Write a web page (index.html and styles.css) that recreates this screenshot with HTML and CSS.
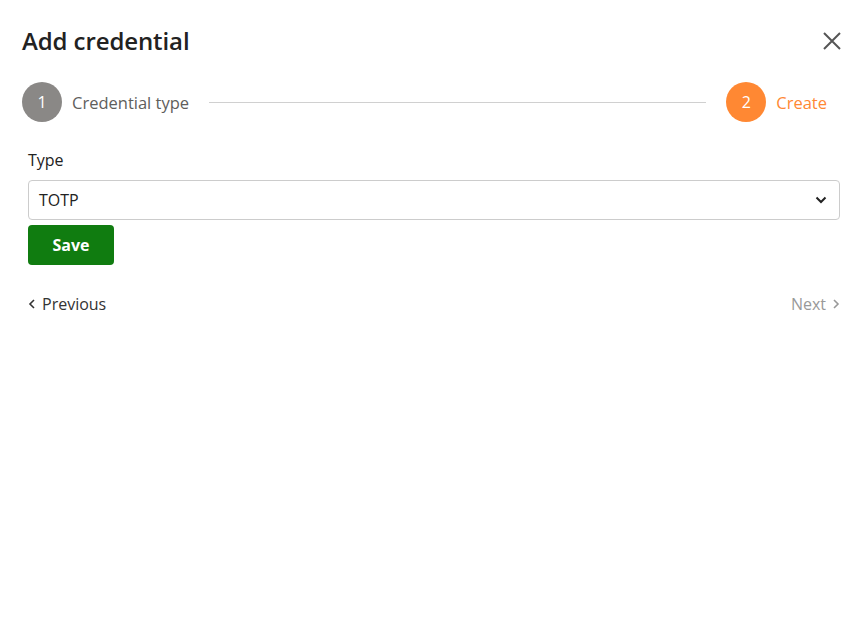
FILE: index.html
```html
<!DOCTYPE html>
<html>
<head>
<meta charset="utf-8">
<link rel="stylesheet" href="styles.css">
</head>
<body>
<div class="dialog">
  <div class="header">
    <h1 class="title">Add credential</h1>
    <button class="close" aria-label="Close">
      <svg width="18" height="18" viewBox="0 0 18 18"><path d="M1 1L17 17M17 1L1 17" stroke="#555" stroke-width="2" fill="none"/></svg>
    </button>
  </div>
  <div class="stepper">
    <div class="step done">
      <span class="num">1</span>
      <span class="label">Credential type</span>
    </div>
    <div class="line"></div>
    <div class="step active">
      <span class="num">2</span>
      <span class="label">Create</span>
    </div>
  </div>
  <div class="form">
    <label class="field-label">Type</label>
    <div class="select">
      <span>TOTP</span>
      <svg width="12" height="8" viewBox="0 0 12 8"><path d="M1.5 1.5L6 6L10.5 1.5" stroke="#222" stroke-width="2" fill="none"/></svg>
    </div>
    <button class="save">Save</button>
  </div>
  <div class="nav">
    <span class="prev">
      <svg width="8" height="10" viewBox="0 0 8 10"><path d="M6 1L2 5L6 9" stroke="#333" stroke-width="1.6" fill="none"/></svg>
      Previous
    </span>
    <span class="next">
      Next
      <svg width="8" height="10" viewBox="0 0 8 10"><path d="M2 1L6 5L2 9" stroke="#999" stroke-width="1.6" fill="none"/></svg>
    </span>
  </div>
</div>
</body>
</html>
```
FILE: styles.css
```css
* { box-sizing: border-box; }
html, body { margin: 0; padding: 0; background: #fff; }
body { font-family: "Open Sans", "Noto Sans", sans-serif; color: #222; }
.dialog { width: 850px; height: 626px; padding: 0 10px 0 22px; }
.header { display: flex; justify-content: space-between; align-items: center; height: 82px; padding-bottom: 2px; }
.title { margin: 0; font-size: 24px; font-weight: 600; color: #222; letter-spacing: -0.1px; }
.close { border: 0; background: none; padding: 0; width: 20px; height: 20px; display: flex; align-items: center; justify-content: center; margin-right: -2px; margin-top: 2px; }
.stepper { display: flex; align-items: center; height: 40px; margin-right: 13px; }
.step { display: flex; align-items: center; gap: 10px; }
.num { width: 40px; height: 40px; border-radius: 50%; display: flex; align-items: center; justify-content: center; color: #fff; font-size: 16px; }
.step.done .num { background: #8a8886; }
.step.done .label { color: #605e5c; font-size: 16.5px; }
.step.active .num { background: #ff8833; }
.step.active .label { color: #ff8833; font-size: 16.5px; }
.line { flex: 1; height: 1px; background: #d0d0d0; margin: 0 20px; }
.form { padding-left: 6px; margin-top: 26px; }
.field-label { display: block; font-size: 16px; color: #222; line-height: 24px; height: 32px; }
.select { display: flex; justify-content: space-between; align-items: center; height: 40px; border: 1px solid #ccc; border-radius: 4px; padding: 0 12px 0 10px; font-size: 16px; color: #222; }
.save { margin-top: 5px; width: 86px; height: 40px; background: #107c10; color: #fff; border: 0; border-radius: 4px; font-family: inherit; font-weight: 700; font-size: 16px; }
.nav { display: flex; justify-content: space-between; align-items: center; padding-left: 6px; margin-top: 28px; font-size: 16px; height: 22px; }
.prev { display: flex; align-items: center; gap: 6px; color: #333; }
.next { display: flex; align-items: center; gap: 6px; color: #999; }
```
